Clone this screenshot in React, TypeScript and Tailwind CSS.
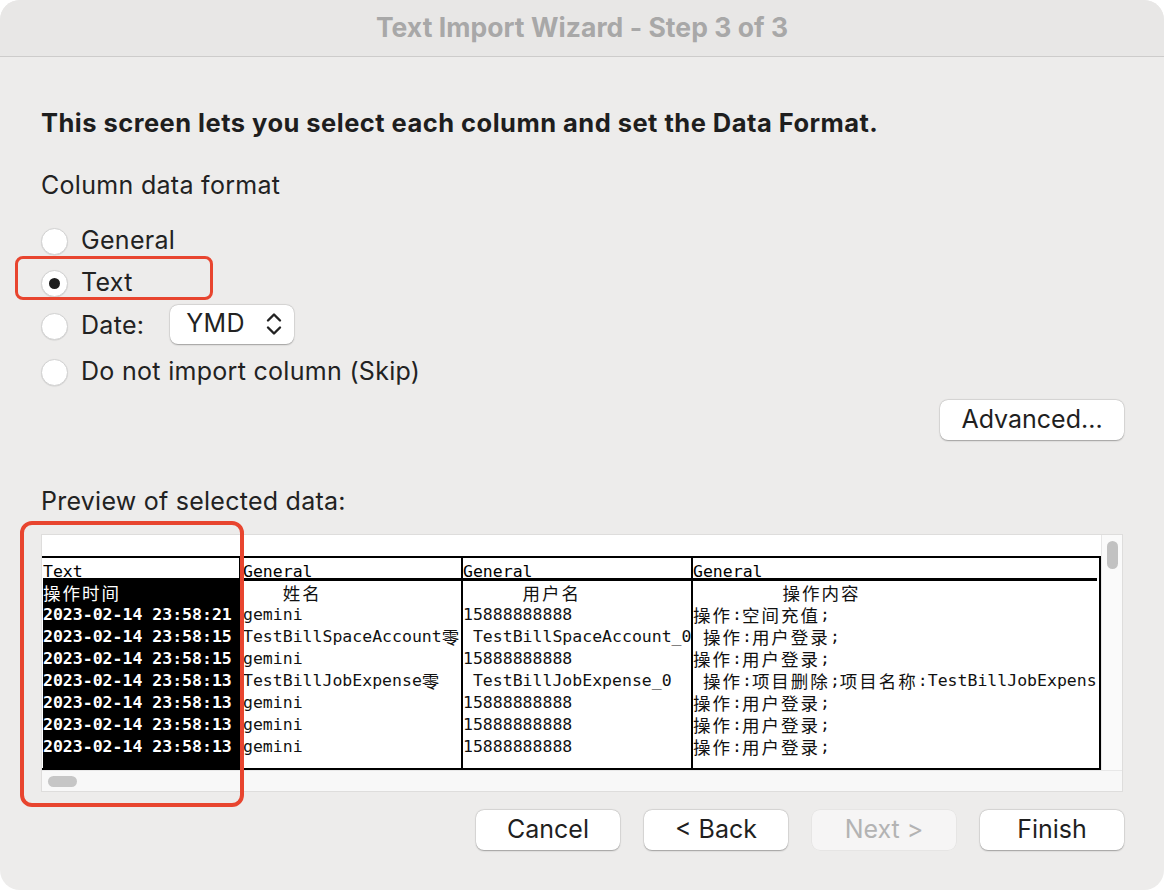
import React from "react";

const mono = { fontFamily: '"DejaVu Sans Mono", "Noto Sans CJK SC", monospace' };

const rows: [string, string, string, string][] = [
  ["2023-02-14 23:58:21", "gemini", "15888888888", "操作:空间充值;"],
  ["2023-02-14 23:58:15", "TestBillSpaceAccount零", " TestBillSpaceAccount_0", " 操作:用户登录;"],
  ["2023-02-14 23:58:15", "gemini", "15888888888", "操作:用户登录;"],
  ["2023-02-14 23:58:13", "TestBillJobExpense零", " TestBillJobExpense_0", " 操作:项目删除;项目名称:TestBillJobExpense_0"],
  ["2023-02-14 23:58:13", "gemini", "15888888888", "操作:用户登录;"],
  ["2023-02-14 23:58:13", "gemini", "15888888888", "操作:用户登录;"],
  ["2023-02-14 23:58:13", "gemini", "15888888888", "操作:用户登录;"],
];

const headers = ["Text", "General", "General", "General"];
const titles = ["操作时间", "    姓名", "      用户名", "         操作内容"];

function MonoText({ text }: { text: string }) {
  const parts = text.split(/([\u3400-\u9fff]+)/).filter((p) => p.length > 0);
  return (
    <>
      {parts.map((p, i) =>
        /[\u3400-\u9fff]/.test(p) ? (
          <span
            key={i}
            className="inline-block align-top h-[22px] text-[17.5px] tracking-[2px] leading-[22px] font-normal"
            style={{ fontFamily: '"Noto Sans CJK SC", sans-serif' }}
          >
            {p}
          </span>
        ) : (
          <span key={i} className="inline-block align-top h-[22px] leading-[22px]">
            {p}
          </span>
        )
      )}
    </>
  );
}

function Radio({ checked }: { checked?: boolean }) {
  return (
    <div className="w-[27px] h-[27px] rounded-full bg-white border border-[#d2d2d2] shadow-[0_0.5px_1px_rgba(0,0,0,0.12)] flex items-center justify-center shrink-0">
      {checked && <div className="w-[11px] h-[11px] rounded-full bg-[#1d1d1d]" />}
    </div>
  );
}

function Button({ label, disabled }: { label: string; disabled?: boolean }) {
  return (
    <div
      className={
        "w-[144px] h-[40px] rounded-[8px] flex items-center justify-center text-[25px] " +
        (disabled
          ? "bg-[#f6f5f5] text-[#b3b3b3] shadow-[0_0_0_0.5px_rgba(0,0,0,0.06)]"
          : "bg-white text-[#1f1f1f] shadow-[0_0.5px_1.5px_rgba(0,0,0,0.3),0_0_0_0.5px_rgba(0,0,0,0.08)]")
      }
    >
      {label}
    </div>
  );
}

function Column({
  idx,
  width,
  className,
}: {
  idx: number;
  width: string;
  className: string;
}) {
  const dark = idx === 0;
  const cell =
    "h-[22px] leading-[22px] text-[16.5px] whitespace-pre overflow-hidden " + (dark ? "font-bold" : "");
  return (
    <div className={"flex flex-col shrink-0 overflow-hidden " + width + " " + className}>
      <div className="h-[20px] bg-white border-b-[3px] border-black box-content">
        <div
          className="leading-[20px] text-[16.5px] text-black whitespace-pre h-[20px] overflow-hidden relative top-[4px]"
          style={mono}
        >
          {headers[idx]}
        </div>
      </div>
      <div
        className={"flex-1 overflow-hidden pt-[1px] " + (dark ? "bg-black text-white" : "bg-white text-[#111]")}
        style={mono}
      >
        <div className={cell}>
          <MonoText text={titles[idx]} />
        </div>
        {rows.map((r, i) => (
          <div key={i} className={cell}>
            <MonoText text={r[idx]} />
          </div>
        ))}
      </div>
    </div>
  );
}

export default function App() {
  return (
    <div className="w-[1164px] h-[890px] bg-white" style={{ fontFamily: 'Inter, "Liberation Sans", sans-serif' }}>
      <div className="relative w-[1164px] h-[890px] rounded-[20px] overflow-hidden bg-[#edeceb] flex flex-col">
        {/* Title bar */}
        <div className="h-[57px] shrink-0 bg-[#e8e7e6] border-b border-[#cdcccb] flex items-center justify-center">
          <span className="text-[26.5px] font-bold text-[#a8a8a8] tracking-[0.05px]">
            Text Import Wizard - Step 3 of 3
          </span>
        </div>

        <div className="pl-[41px] pr-[40px] flex flex-col">
          <div className="mt-[51px] leading-[30px] text-[25.5px] font-bold text-[#1e1e1e] tracking-[0.47px]">
            This screen lets you select each column and set the Data Format.
          </div>
          <div className="mt-[32px] leading-[30px] text-[25px] text-[#222] tracking-[0.3px]">Column data format</div>

          <div className="mt-[20px] flex flex-col text-[25px] text-[#222] tracking-[0.3px]">
            <div className="h-[42px] flex items-center">
              <Radio />
              <span className="ml-[13px]">General</span>
            </div>
            <div className="h-[42px] flex items-center">
              <Radio checked />
              <span className="ml-[13px]">Text</span>
            </div>
            <div className="h-[44px] flex items-center">
              <Radio />
              <span className="ml-[13px]">Date:</span>
              <div className="ml-[26px] w-[124px] h-[39px] rounded-[8px] bg-white shadow-[0_0.5px_1.5px_rgba(0,0,0,0.3),0_0_0_0.5px_rgba(0,0,0,0.08)] flex items-center pl-[16px] pr-[12px] relative top-[-2px]">
                <span className="flex-1">YMD</span>
                <svg width="16" height="26" viewBox="0 0 16 26" fill="none" stroke="#222" strokeWidth="2.4" strokeLinecap="round" strokeLinejoin="round">
                  <path d="M2 9.5 L8 3.5 L14 9.5" />
                  <path d="M2 16.5 L8 22.5 L14 16.5" />
                </svg>
              </div>
            </div>
            <div className="h-[48px] flex items-center">
              <Radio />
              <span className="ml-[13px]">Do not import column (Skip)</span>
            </div>
          </div>

          <div className="mt-[4px] flex justify-end">
            <div className="w-[184px] h-[40px] rounded-[8px] bg-white text-[#1f1f1f] text-[25px] flex items-center justify-center shadow-[0_0.5px_1.5px_rgba(0,0,0,0.3),0_0_0_0.5px_rgba(0,0,0,0.08)]">
              Advanced...
            </div>
          </div>

          <div className="mt-[46px] leading-[30px] text-[25px] text-[#222] tracking-[0.25px]">Preview of selected data:</div>

          {/* Preview box */}
          <div className="mt-[18px] w-[1082px] h-[258px] border border-[#dedddc] bg-white flex flex-col">
            <div className="flex h-[235px]">
              <div className="w-[1059px] pt-[21px] flex flex-col">
                <div className="flex h-[214px] border-t-2 border-b-2 border-r-2 border-black">
                  <Column idx={0} width="w-[197px]" className="pl-[1px]" />
                  <Column idx={1} width="w-[222px]" className="border-l-2 border-black pl-[2px]" />
                  <Column idx={2} width="w-[230px]" className="border-l-2 border-black" />
                  <Column idx={3} width="w-[406px]" className="border-l-2 border-black" />
                </div>
              </div>
              <div className="w-[21px] bg-[#fafafa] border-l border-[#e6e6e6] pt-[6px] flex justify-center">
                <div className="w-[11px] h-[28px] rounded-full bg-[#c2c2c2]" />
              </div>
            </div>
            <div className="flex-1 bg-[#f8f8f8] border-t border-[#e8e8e8] flex items-center pl-[6px]">
              <div className="w-[29px] h-[11px] rounded-full bg-[#c6c6c6]" />
            </div>
          </div>

          <div className="mt-[18px] flex justify-end gap-[24px]">
            <Button label="Cancel" />
            <Button label="< Back" />
            <Button label="Next >" disabled />
            <Button label="Finish" />
          </div>
        </div>

        {/* Red annotation boxes */}
        <div className="absolute left-[15px] top-[256px] w-[198px] h-[44px] border-[3px] border-[#e8452f] rounded-[8px] pointer-events-none" />
        <div className="absolute left-[20px] top-[521px] w-[224px] h-[286px] border-[4px] border-[#e8452f] rounded-[12px] pointer-events-none" />
      </div>
    </div>
  );
}
